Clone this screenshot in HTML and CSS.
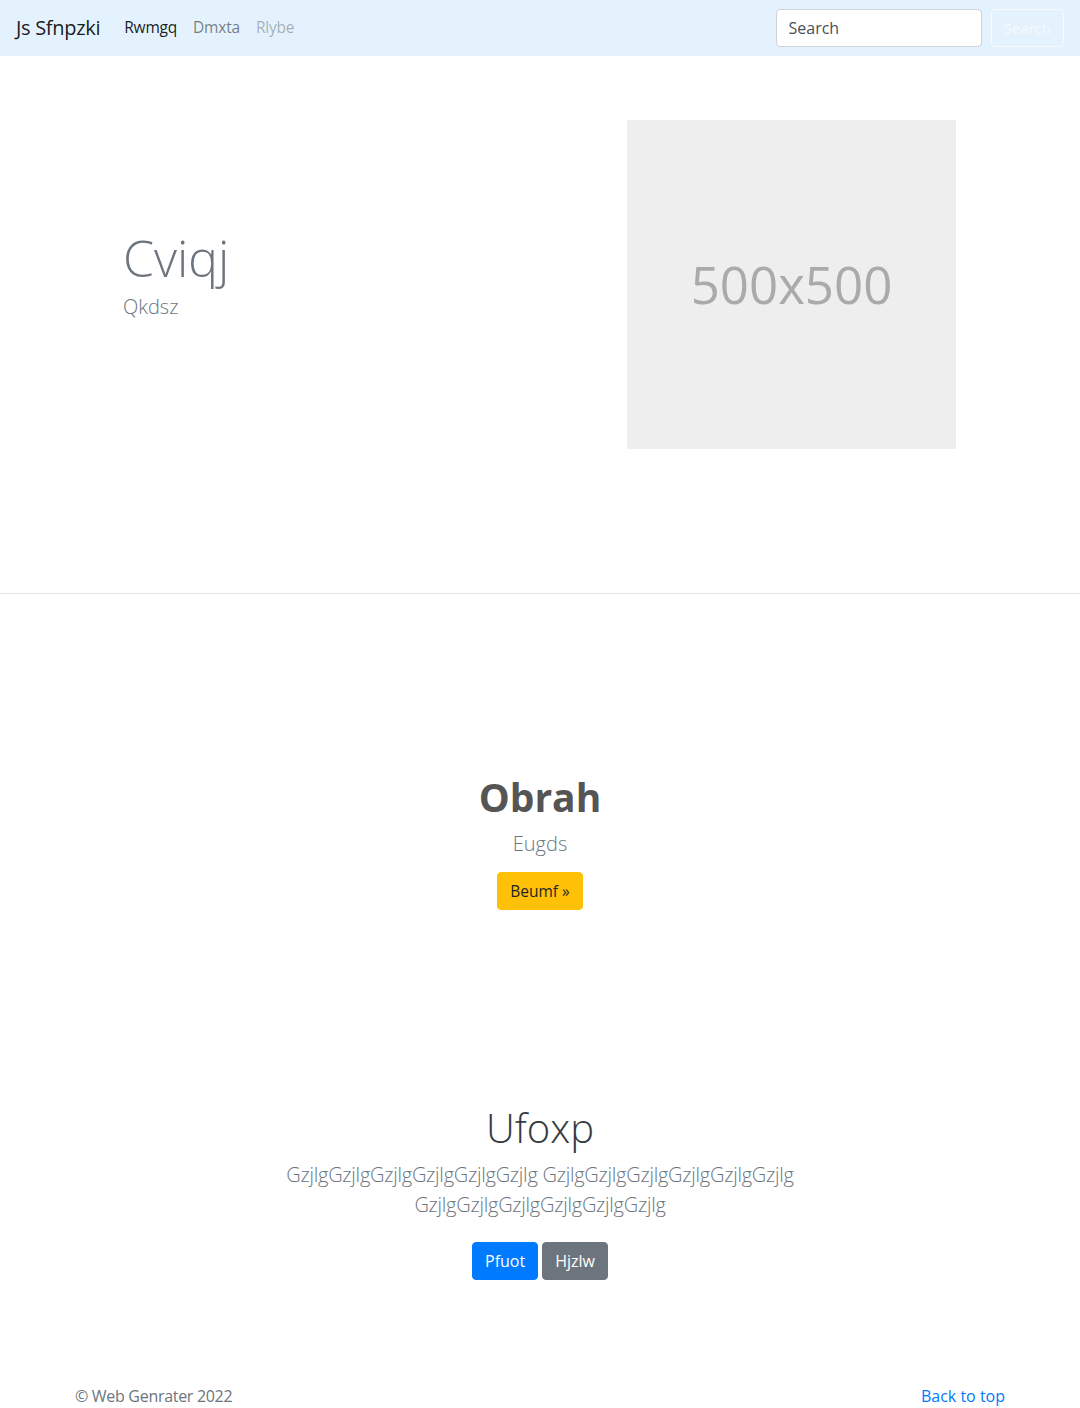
FILE: index.html
```html
<!DOCTYPE html>
<html lang="en">
<head>
<meta charset="utf-8">
<title>Js Sfnpzki</title>
<link rel="stylesheet" href="styles.css">
</head>
<body>
<nav class="navbar">
  <a class="brand" href="#">Js Sfnpzki</a>
  <ul class="nav">
    <li><a class="nav-link active" href="#">Rwmgq</a></li>
    <li><a class="nav-link" href="#">Dmxta</a></li>
    <li><a class="nav-link disabled" href="#">Rlybe</a></li>
  </ul>
  <form class="search">
    <input class="search-input" type="text" placeholder="Search">
    <button class="btn btn-outline-light" type="button">Search</button>
  </form>
</nav>

<section class="hero">
  <div class="container hero-row">
    <div class="hero-text">
      <h1 class="hero-title">Cviqj</h1>
      <p class="lead muted">Qkdsz</p>
    </div>
    <div class="hero-media">
      <div class="placeholder">500x500</div>
    </div>
  </div>
</section>

<section class="feature">
  <h1 class="feature-title">Obrah</h1>
  <p class="lead muted">Eugds</p>
  <a class="btn btn-warning" href="#">Beumf &raquo;</a>
</section>

<section class="jumbo">
  <h1 class="jumbo-title">Ufoxp</h1>
  <p class="lead muted jumbo-text">GzjlgGzjlgGzjlgGzjlgGzjlgGzjlg GzjlgGzjlgGzjlgGzjlgGzjlgGzjlg GzjlgGzjlgGzjlgGzjlgGzjlgGzjlg</p>
  <div class="btn-group">
    <a class="btn btn-primary" href="#">Pfuot</a>
    <a class="btn btn-secondary" href="#">Hjzlw</a>
  </div>
</section>

<footer class="container footer">
  <p class="copy">&copy; Web Genrater 2022</p>
  <a class="back" href="#">Back to top</a>
</footer>
</body>
</html>
```

FILE: styles.css
```css
* { box-sizing: border-box; }
html, body { margin: 0; padding: 0; }
body {
  font-family: "Open Sans", "Noto Sans", sans-serif;
  font-size: 16px;
  line-height: 1.5;
  color: #212529;
  background: #fff;
}
a { text-decoration: none; }
h1, p { margin: 0; }

.navbar {
  display: flex;
  align-items: center;
  height: 56px;
  padding: 8px 16px;
  background: #e3f2fd;
}
.brand {
  font-size: 20px;
  line-height: 30px;
  color: rgba(0,0,0,.9);
  margin-right: 16px;
  letter-spacing: -0.3px;
}
.nav {
  display: flex;
  list-style: none;
  margin: 0;
  padding: 0;
  flex: 1;
}
.nav-link {
  display: block;
  padding: 8px;
  font-size: 15.5px;
  letter-spacing: -0.2px;
  color: rgba(0,0,0,.5);
}
.nav-link.active { color: rgba(0,0,0,.9); }
.nav-link.disabled { color: rgba(0,0,0,.3); }

.search { display: flex; align-items: center; }
.search-input {
  width: 206px;
  height: 38px;
  padding: 6px 12px;
  font: inherit;
  color: #495057;
  border: 1px solid #ced4da;
  border-radius: 4px;
  margin-right: 9px;
  background: #fff;
}
.search-input::placeholder { color: #495057; }

.btn {
  display: inline-block;
  font: inherit;
  line-height: 24px;
  padding: 6px 12px;
  border: 1px solid transparent;
  border-radius: 4px;
  cursor: pointer;
}
.btn-outline-light {
  background: transparent;
  color: #f8f9fa;
  border-color: #f8f9fa;
  font-size: 15px;
  padding: 6px 12px;
}
.btn-warning { background: #ffc107; border-color: #ffc107; color: #212529; }
.btn-primary { background: #007bff; border-color: #007bff; color: #fff; }
.btn-secondary { background: #6c757d; border-color: #6c757d; color: #fff; }

.container {
  max-width: 960px;
  margin: 0 auto;
  padding: 0 15px;
}

.hero {
  padding: 64px 0 144px;
  border-bottom: 1px solid #dee2e6;
}
.hero-row { display: flex; align-items: center; }
.hero-text { flex: 1; padding-left: 48px; padding-bottom: 20px; }
.hero-title {
  font-size: 50px;
  font-weight: 300;
  line-height: 1.2;
  color: #6c757d;
  margin-bottom: 4px;
}
.lead { font-size: 20px; font-weight: 300; line-height: 30px; }
.muted { color: #6c757d; }
.hero-media { flex: 1; display: flex; justify-content: flex-end; padding-right: 49px; }
.placeholder {
  width: 329px;
  height: 329px;
  background: #eee;
  color: #aaa;
  font-size: 51px;
  display: flex;
  align-items: center;
  justify-content: center;
}

.feature {
  text-align: center;
  padding: 179px 0 0;
}
.feature-title {
  font-size: 39px;
  font-weight: 700;
  line-height: 48px;
  color: #555;
  margin-bottom: 8px;
}
.feature .lead { margin-bottom: 13px; }
.feature .btn { font-size: 15.5px; padding: 6px 12px; }

.jumbo {
  text-align: center;
  padding: 194px 0 0;
}
.jumbo-title {
  font-size: 40px;
  font-weight: 300;
  line-height: 48px;
  color: #343a40;
  margin-bottom: 8px;
}
.jumbo-text {
  max-width: 620px;
  margin: 0 auto 22px;
  letter-spacing: -0.25px;
}
.btn-group { display: flex; justify-content: center; gap: 4px; }

.footer {
  display: flex;
  justify-content: space-between;
  align-items: center;
  padding-top: 104px;
  padding-bottom: 0;
}
.copy { color: #6c757d; letter-spacing: -0.3px; }
.back { color: #007bff; }
```
